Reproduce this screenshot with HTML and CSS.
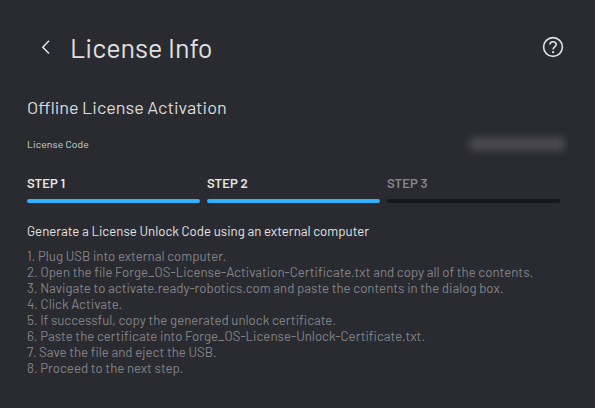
FILE: index.html
```html
<!DOCTYPE html>
<html lang="en">
<head>
<meta charset="utf-8">
<title>License Info</title>
<link rel="stylesheet" href="styles.css">
</head>
<body>
<main class="page">
  <header class="header">
    <svg class="back" viewBox="0 0 12 18"><path d="M10 2.8 3.8 9.2l6.2 6.4"/></svg>
    <h1 class="title">License Info</h1>
    <svg class="help" viewBox="0 0 22 22"><circle cx="11" cy="11" r="9.4"/><path d="M8 8.6C8 6.8 9.3 5.8 11 5.8s3.2 1 3.2 2.7c0 2.4-3.1 2.3-3.1 4.9"/><circle class="dot" cx="11.1" cy="16.2" r="1.15"/></svg>
  </header>
  <h2 class="subtitle">Offline License Activation</h2>
  <div class="code-row">
    <span class="code-label">License Code</span>
    <span class="code-mask"><span class="code-blur"></span></span>
  </div>
  <div class="steps">
    <div class="step">STEP 1</div>
    <div class="step">STEP 2</div>
    <div class="step pending">STEP 3</div>
  </div>
  <h3 class="lead">Generate a License Unlock Code using an external computer</h3>
  <div class="list">
    <p>1. Plug USB into external computer.</p>
    <p>2. Open the file Forge_OS-License-Activation-Certificate.txt and copy all of the contents.</p>
    <p>3. Navigate to activate.ready-robotics.com and paste the contents in the dialog box.</p>
    <p>4. Click Activate.</p>
    <p>5. If successful, copy the generated unlock certificate.</p>
    <p>6. Paste the certificate into Forge_OS-License-Unlock-Certificate.txt.</p>
    <p>7. Save the file and eject the USB.</p>
    <p>8. Proceed to the next step.</p>
  </div>
</main>
</body>
</html>
```
FILE: styles.css
```css
* { box-sizing: border-box; margin: 0; padding: 0; }
body { background: #2a2b30; color: #e6e6e6; font-family: Barlow, Roboto, sans-serif; }
.page { width: 595px; height: 408px; padding: 27px 27px 0; overflow: hidden; }
.header { display: flex; align-items: center; height: 40px; }
.back { width: 12px; height: 18px; margin-left: 12px; }
.back path { fill: none; stroke: #e6e6e6; stroke-width: 1.5; }
.title { margin-left: 19px; font-size: 27px; font-weight: 400; line-height: 34px; color: #e0e0e0; }
.help { width: 22px; height: 22px; margin-left: auto; margin-right: 4px; }
.help circle { fill: none; stroke: #e0e0e0; stroke-width: 1.6; }
.help path { fill: none; stroke: #e0e0e0; stroke-width: 1.6; }
.help .dot { fill: #e0e0e0; stroke: none; }
.subtitle { margin-top: 28px; font-size: 18px; font-weight: 400; line-height: 24px; color: #dcdcdc; }
.code-row { display: flex; align-items: center; justify-content: space-between; height: 26px; margin-top: 12px; }
.code-label { font-size: 10.3px; letter-spacing: 0.14px; color: #dcdcdc; }
.code-mask { width: 103px; height: 26px; padding: 7px 3px 7px 5px; overflow: hidden; }
.code-blur { display: block; height: 12px; background: #4e4e53; border-radius: 3px; filter: blur(4px); }
.steps { display: flex; gap: 7px; margin-top: 18px; }
.step { width: 173px; height: 28px; font-size: 13.2px; font-weight: 600; line-height: 16px; }
.step::after { content: ""; display: block; height: 4px; margin-top: 8px; border-radius: 2px; background: #2fb2ff; }
.pending { color: #85868a; }
.pending::after { background: #17171b; }
.lead { margin-top: 20px; font-size: 13.24px; font-weight: 400; line-height: 16px; }
.list { margin-top: 9px; color: #828388; font-size: 13.24px; line-height: 16px; white-space: nowrap; }
```
